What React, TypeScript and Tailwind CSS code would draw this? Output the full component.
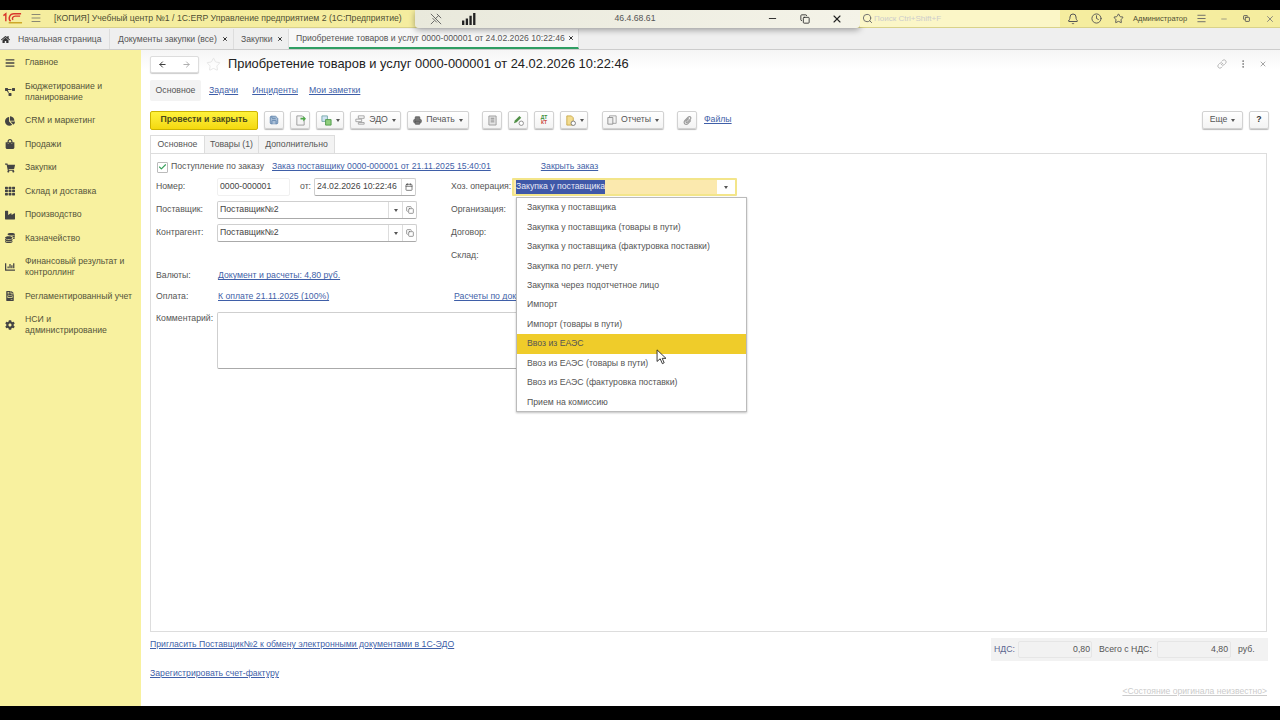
import {
  ArrowLeft,
  ArrowRight,
  Bell,
  Calendar,
  Check,
  Clock,
  Copy,
  EllipsisVertical,
  Link as LinkIcon,
  Menu,
  Minus,
  Printer,
  Save,
  Search,
  Star,
  X,
} from "lucide-react";
import {
  FaBars,
  FaChartBar,
  FaChartPie,
  FaCoins,
  FaCog,
  FaFileInvoice,
  FaHome,
  FaIndustry,
  FaPaperclip,
  FaProjectDiagram,
  FaShoppingBag,
  FaShoppingCart,
  FaTh,
} from "react-icons/fa";

const menu = [
  { icon: FaBars, label: "Главное", h: "h-[23px]" },
  { icon: FaProjectDiagram, label: "Бюджетирование и\nпланирование", h: "h-[35px]" },
  { icon: FaChartPie, label: "CRM и маркетинг", h: "h-[23px]" },
  { icon: FaShoppingBag, label: "Продажи", h: "h-[24px]" },
  { icon: FaShoppingCart, label: "Закупки", h: "h-[23px]" },
  { icon: FaTh, label: "Склад и доставка", h: "h-[24px]" },
  { icon: FaIndustry, label: "Производство", h: "h-[23px]" },
  { icon: FaCoins, label: "Казначейство", h: "h-[24px]" },
  { icon: FaChartBar, label: "Финансовый результат и\nконтроллинг", h: "h-[34px]" },
  { icon: FaFileInvoice, label: "Регламентированный учет", h: "h-[24px]" },
  { icon: FaCog, label: "НСИ и\nадминистрирование", h: "h-[34px]" },
];

const options = [
  "Закупка у поставщика",
  "Закупка у поставщика (товары в пути)",
  "Закупка у поставщика (фактуровка поставки)",
  "Закупка по регл. учету",
  "Закупка через подотчетное лицо",
  "Импорт",
  "Импорт (товары в пути)",
  "Ввоз из ЕАЭС",
  "Ввоз из ЕАЭС (товары в пути)",
  "Ввоз из ЕАЭС (фактуровка поставки)",
  "Прием на комиссию",
];

function Caret() {
  return <span className="ml-[4px] h-0 w-0 border-x-[2.5px] border-t-[3px] border-x-transparent border-t-[#555]" />;
}

function Btn({ children, w }: { children: React.ReactNode; w: string }) {
  return (
    <div className={`flex h-[18px] ${w} shrink-0 items-center justify-center rounded-[2px] border border-[#d2d2d2] bg-gradient-to-b from-white to-[#f3f3f3] text-[8.7px] text-[#555] shadow-[0_1px_1px_#bbb]`}>
      {children}
    </div>
  );
}

function Combo({ value }: { value: string }) {
  return (
    <div className="flex h-[18px] w-[200px] items-center rounded-[2px] border border-[#cfcfcf] border-b-[#aaa] bg-white text-[#444]">
      <span className="flex-1 pl-[2px]">{value}</span>
      <span className="flex h-full w-[14px] items-center justify-center border-l border-[#ddd]">
        <span className="h-0 w-0 border-x-[2.5px] border-t-[3px] border-x-transparent border-t-[#555]" />
      </span>
      <span className="flex h-full w-[14px] items-center justify-center border-l border-[#ddd]">
        <Copy className="h-[8px] w-[8px] text-[#666]" />
      </span>
    </div>
  );
}

function Lnk({ children, className = "" }: { children: React.ReactNode; className?: string }) {
  return <span className={`whitespace-nowrap text-[#3f5fa8] underline ${className}`}>{children}</span>;
}

export default function App() {
  return (
    <div className="relative flex h-screen w-[1280px] flex-col overflow-hidden bg-black font-['Liberation_Sans',Arial,sans-serif] text-[8.7px] text-[#555]">
      <div className="h-[10px] shrink-0 bg-black" />

      {/* заголовок окна */}
      <div className="relative z-10 flex h-[18px] shrink-0 items-center border-b border-[#d9d28a] bg-[#f5ed9f]">
        <div className="flex w-[415px] shrink-0 items-center">
          <svg viewBox="0 0 22 12" className="ml-[2px] h-[12px] w-[21px]">
            <path d="M1.5 3.5 L4 1.5 V9.5 M9 9.5 C6 6.5 8 1.5 12.5 1.5 H20 M11.5 8 C10 6 11.5 4 14 4 H19" fill="none" stroke="#d9372c" strokeWidth="1.5" />
            <path d="M7 11 H21" stroke="#c9a01c" strokeWidth="1.4" />
          </svg>
          <Menu className="ml-[7px] h-[12px] w-[12px] text-[#666]" strokeWidth={1.5} />
          <span className="ml-[12px] whitespace-nowrap text-[#4f4f33]">[КОПИЯ] Учебный центр №1 / 1С:ERP Управление предприятием 2 (1С:Предприятие)</span>
        </div>
        <div className="flex h-[18px] w-[445px] shrink-0 items-center rounded-b-[4px] bg-gradient-to-r from-[#e9e9dc] to-[#f4f3e8] text-[#444] shadow-[0_2px_6px_rgba(0,0,0,0.35)]">
          <svg viewBox="0 0 14 14" className="ml-[15px] h-[12px] w-[12px]">
            <path d="M1 1 L13 13 M8 1 L13 6 M10 3 L6 7 M3 6 L8 11 M5 9 L1 13" fill="none" stroke="#555" strokeWidth="1" />
          </svg>
          <svg viewBox="0 0 16 13" className="ml-[19px] h-[12px] w-[15px]">
            <path d="M1 8h2.5v5H1zM5 6h2.5v7H5zM9 3h2.5v10H9zM13 0h2.5v13H13z" fill="#222" />
          </svg>
          <span className="ml-[136px] w-[46px] whitespace-nowrap text-center text-[#555]">46.4.68.61</span>
          <Minus className="ml-[109px] h-[11px] w-[11px] text-[#222]" strokeWidth={2} />
          <Copy className="ml-[22px] h-[10px] w-[10px] text-[#222]" strokeWidth={2} />
          <X className="ml-[21px] h-[12px] w-[12px] text-[#222]" strokeWidth={2.2} />
        </div>
        <div className="flex h-full flex-1 items-center">
          <div className="flex h-full w-[200px] items-center bg-[#fbf6c7] pl-[2px]">
            <Search className="h-[11px] w-[11px] text-[#666]" />
            <span className="ml-[1px] text-[8px] text-[#ccc]">Поиск Ctrl+Shift+F</span>
          </div>
          <Bell className="ml-[7px] h-[12px] w-[12px] text-[#555]" />
          <Clock className="ml-[12px] h-[11px] w-[11px] text-[#555]" />
          <Star className="ml-[11px] h-[11px] w-[11px] text-[#555]" />
          <span className="ml-[9px] whitespace-nowrap text-[7.5px] text-[#4f4f33]">Администратор</span>
          <Menu className="ml-[9px] h-[11px] w-[11px] text-[#666]" />
          <Minus className="ml-[13px] h-[8px] w-[8px] text-[#777]" />
          <Copy className="ml-[15px] h-[7px] w-[7px] text-[#555]" strokeWidth={3} />
          <X className="ml-[15px] h-[10px] w-[10px] text-[#777]" />
        </div>
      </div>

      {/* вкладки */}
      <div className="flex h-[22px] shrink-0 border-b border-[#ccc] bg-[#efefef] pt-[1px] text-[8.65px] text-[#555]">
        <div className="flex w-[110px] items-center border-r border-[#ddd] pl-[1px]">
          <FaHome className="h-[9px] w-[9px] text-[#333]" />
          <span className="ml-[8px] whitespace-nowrap">Начальная страница</span>
        </div>
        <div className="flex w-[124px] items-center border-r border-[#ddd] pl-[8px]">
          <span className="whitespace-nowrap">Документы закупки (все)</span>
          <X className="ml-[5px] h-[6px] w-[6px] text-[#333]" strokeWidth={4} />
        </div>
        <div className="flex w-[55px] items-center border-r border-[#ddd] pl-[7px]">
          <span>Закупки</span>
          <X className="ml-[5px] h-[6px] w-[6px] text-[#333]" strokeWidth={4} />
        </div>
        <div className="flex w-[290px] items-center border-b-2 border-r border-b-[#2f9e63] border-r-[#ddd] bg-[#f7f7f7] pl-[7px]">
          <span className="whitespace-nowrap">Приобретение товаров и услуг 0000-000001 от 24.02.2026 10:22:46</span>
          <X className="ml-[3px] h-[6px] w-[6px] text-[#333]" strokeWidth={4} />
        </div>
      </div>

      <div className="flex min-h-0 flex-1">
        {/* левое меню */}
        <div className="w-[141px] shrink-0 bg-[#f8f19f] pt-[1px] text-[#54543a]">
          {menu.map((m) => (
            <div key={m.label} className={`flex ${m.h} items-center pl-[5px]`}>
              <m.icon className="h-[10px] w-[10px] shrink-0 text-[#444]" />
              <span className="ml-[10px] whitespace-pre-line leading-[11px]">{m.label}</span>
            </div>
          ))}
        </div>

        {/* форма */}
        <div className="flex min-w-0 flex-1 flex-col bg-gradient-to-b from-[#f5f5f5] to-white to-[3%] pl-[9px] pr-[13px]">
          <div className="flex h-[26px] items-center pt-[2px]">
            <div className="flex h-[17px] w-[49px] items-center justify-around rounded-[2px] border border-[#ddd] bg-white shadow-[0_1px_1px_#ccc]">
              <ArrowLeft className="h-[9px] w-[9px] text-[#333]" strokeWidth={2.5} />
              <ArrowRight className="h-[9px] w-[9px] text-[#aaa]" strokeWidth={2.5} />
            </div>
            <Star className="ml-[7px] h-[15px] w-[15px] text-[#ddd]" strokeWidth={1.2} />
            <span className="ml-[7px] whitespace-nowrap text-[12.87px] text-[#222]">Приобретение товаров и услуг 0000-000001 от 24.02.2026 10:22:46</span>
            <div className="ml-auto flex items-center text-[#aaa]">
              <LinkIcon className="h-[10px] w-[10px]" />
              <EllipsisVertical className="ml-[11px] h-[10px] w-[10px] text-[#777]" />
              <X className="ml-[11px] h-[8px] w-[8px] text-[#777]" />
            </div>
          </div>

          <div className="mt-[3px] flex h-[22px] items-center pt-[1px]">
            <span className="flex h-full w-[51px] items-center justify-center rounded-[2px] bg-[#f3f3f3] text-[#555]">Основное</span>
            <Lnk className="ml-[8px]">Задачи</Lnk>
            <Lnk className="ml-[14px]">Инциденты</Lnk>
            <Lnk className="ml-[11px]">Мои заметки</Lnk>
          </div>

          {/* командная панель */}
          <div className="mt-[9px] flex h-[20px] items-center">
            <div className="flex h-[19px] w-[108px] items-center justify-center rounded-[2px] border border-[#cdb400] bg-gradient-to-b from-[#fff23a] to-[#f4d90c] font-bold text-[#4a4a1a]">Провести и закрыть</div>
            <div className="ml-[6px]"><Btn w="w-[20px]"><Save className="h-[10px] w-[10px] fill-[#a9bfd8] text-[#5a7fa8]" /></Btn></div>
            <div className="ml-[6px]">
              <Btn w="w-[20px]">
                <svg viewBox="0 0 12 12" className="h-[11px] w-[11px]">
                  <path d="M2 1h6l2 2v8H2z" fill="#f4f4f4" stroke="#999" />
                  <path d="M6 3h3V1l3 3-3 3V5H6z" fill="#4fa84a" />
                </svg>
              </Btn>
            </div>
            <div className="ml-[6px]">
              <Btn w="w-[28px]">
                <svg viewBox="0 0 12 12" className="h-[11px] w-[11px]">
                  <path d="M1 1h6v6H1z" fill="#cfe3f2" stroke="#7aa" />
                  <path d="M5 5h6v6H5z" fill="#8fce7d" stroke="#4f9a4a" />
                </svg>
                <Caret />
              </Btn>
            </div>
            <div className="ml-[6px]">
              <Btn w="w-[51px]">
                <svg viewBox="0 0 12 12" className="mr-[4px] h-[10px] w-[10px]">
                  <path d="M4 1h7v3H4zM1 5h7v3H1zM4 9h7v2H4z" fill="none" stroke="#999" />
                </svg>
                ЭДО<Caret />
              </Btn>
            </div>
            <div className="ml-[6px]"><Btn w="w-[62px]"><Printer className="mr-[4px] h-[9px] w-[9px] fill-[#777] text-[#555]" />Печать<Caret /></Btn></div>
            <div className="ml-[13px]">
              <Btn w="w-[20px]">
                <svg viewBox="0 0 10 12" className="h-[11px] w-[9px]">
                  <path d="M1 1h8v10H1z" fill="#e4e4e4" stroke="#999" />
                  <path d="M3 3.5h4M3 5.5h4M3 7.5h4" stroke="#888" />
                </svg>
              </Btn>
            </div>
            <div className="ml-[6px]">
              <Btn w="w-[20px]">
                <svg viewBox="0 0 12 12" className="h-[11px] w-[11px]">
                  <path d="M7 1l2 2-5 5-3 1 1-3z" fill="#4f8f45" />
                  <circle cx="9" cy="9" r="2.4" fill="#fff" stroke="#888" />
                </svg>
              </Btn>
            </div>
            <div className="ml-[6px]"><Btn w="w-[20px]"><span className="flex flex-col text-center text-[5px] font-bold leading-[5px]"><span className="text-[#3d8f3d]">ДТ</span><span className="text-[#c9483c]">КТ</span></span></Btn></div>
            <div className="ml-[6px]">
              <Btn w="w-[28px]">
                <svg viewBox="0 0 12 12" className="h-[11px] w-[11px]">
                  <path d="M2 1h5l2 2v8H2z" fill="#f3dc8f" stroke="#c9a94a" />
                  <circle cx="9" cy="9" r="2.4" fill="#fff" stroke="#777" />
                </svg>
                <Caret />
              </Btn>
            </div>
            <div className="ml-[14px]">
              <Btn w="w-[62px]">
                <svg viewBox="0 0 12 12" className="mr-[4px] h-[10px] w-[10px]">
                  <path d="M3 1h8v9H3z" fill="#f4f4f4" stroke="#999" />
                  <path d="M1 3h6v8H1z" fill="#eee" stroke="#888" />
                </svg>
                Отчеты<Caret />
              </Btn>
            </div>
            <div className="ml-[13px]"><Btn w="w-[20px]"><FaPaperclip className="h-[9px] w-[9px] text-[#999]" /></Btn></div>
            <Lnk className="ml-[7px]">Файлы</Lnk>
            <div className="ml-auto"><Btn w="w-[41px]">Еще<Caret /></Btn></div>
            <div className="ml-[6px] mr-[-2px]"><Btn w="w-[20px]"><span className="font-bold text-[#333]">?</span></Btn></div>
          </div>

          {/* закладки */}
          <div className="mt-[5px] flex h-[18px] items-end">
            <span className="flex h-[18px] w-[55px] items-center justify-center border border-b-0 border-[#ddd] bg-white">Основное</span>
            <span className="flex h-[18px] w-[54px] items-center justify-center border-r border-t border-[#ddd] bg-[#f3f3f3]">Товары (1)</span>
            <span className="flex h-[18px] w-[76px] items-center justify-center border-r border-t border-[#ddd] bg-[#f3f3f3]">Дополнительно</span>
          </div>

          {/* панель формы */}
          <div className="h-[479px] border border-[#ddd] pl-[5px] pt-[6px]">
            <div className="flex h-[14px] items-center">
              <span className="ml-[1px] flex h-[11px] w-[11px] items-center justify-center rounded-[1px] border border-[#bbb]">
                <Check className="h-[10px] w-[10px] text-[#36a05a]" strokeWidth={3} />
              </span>
              <span className="ml-[3px] w-[101px] whitespace-nowrap">Поступление по заказу</span>
              <Lnk>Заказ поставщику 0000-000001 от 21.11.2025 15:40:01</Lnk>
              <Lnk className="ml-[50px]">Закрыть заказ</Lnk>
            </div>

            <div className="mt-[4px] flex h-[18px] items-center">
              <span className="w-[61px]">Номер:</span>
              <span className="flex h-[18px] w-[73px] items-center rounded-[2px] border border-[#f0f0f0] pl-[2px] text-[#444]">0000-000001</span>
              <span className="ml-[10px] w-[14px]">от:</span>
              <span className="flex h-[18px] w-[102px] items-center rounded-[2px] border border-[#cfcfcf] border-b-[#aaa] pl-[2px] text-[#444]">
                <span className="flex-1 whitespace-nowrap">24.02.2026 10:22:46</span>
                <span className="flex h-full w-[14px] items-center justify-center border-l border-[#ddd]"><Calendar className="h-[8px] w-[8px] text-[#444]" /></span>
              </span>
              <span className="ml-[35px] w-[61px] whitespace-nowrap">Хоз. операция:</span>
              <span className="flex h-[18px] w-[225px] items-center rounded-[1px] border-2 border-[#f3e58a] bg-[#fbe9ae] pl-[2px]">
                <span className="bg-[#3f58a8] text-[#e8e8f4]">Закупка у поставщика</span>
                <span className="ml-auto flex h-full w-[18px] items-center justify-center bg-white">
                  <span className="h-0 w-0 border-x-[2.5px] border-t-[3px] border-x-transparent border-t-[#555]" />
                </span>
              </span>
            </div>

            <div className="mt-[5px] flex h-[18px] items-center">
              <span className="w-[61px]">Поставщик:</span>
              <Combo value="Поставщик№2" />
              <span className="ml-[34px]">Организация:</span>
            </div>

            <div className="mt-[5px] flex h-[18px] items-center">
              <span className="w-[61px]">Контрагент:</span>
              <Combo value="Поставщик№2" />
              <span className="ml-[34px]">Договор:</span>
            </div>

            <div className="mt-[8px] flex h-[12px] items-center pl-[295px]">Склад:</div>

            <div className="mt-[8px] flex h-[12px] items-center">
              <span className="w-[62px]">Валюты:</span>
              <Lnk>Документ и расчеты: 4,80 руб.</Lnk>
            </div>

            <div className="mt-[9px] flex h-[12px] items-center">
              <span className="w-[62px]">Оплата:</span>
              <Lnk>К оплате 21.11.2025 (100%)</Lnk>
              <Lnk className="ml-[125px]">Расчеты по документу</Lnk>
            </div>

            <div className="mt-[9px] flex">
              <span className="w-[61px]">Комментарий:</span>
              <div className="h-[57px] w-[500px] rounded-[2px] border border-[#cfcfcf] border-b-[#aaa] bg-white" />
            </div>
          </div>

          {/* подвал */}
          <div className="flex items-start justify-between">
            <div className="flex flex-col pt-[6px]">
              <Lnk className="leading-[12px]">Пригласить Поставщик№2 к обмену электронными документами в 1С-ЭДО</Lnk>
              <Lnk className="mt-[17px] leading-[12px]">Зарегистрировать счет-фактуру</Lnk>
            </div>
            <div className="flex flex-col items-end">
              <div className="mr-[-1px] mt-[6px] flex h-[23px] w-[277px] items-center bg-[#f2f2f2] pl-[3px]">
                <span className="w-[24px] text-[#5a6690]">НДС:</span>
                <span className="flex h-[17px] w-[74px] items-center justify-end rounded-[2px] border border-[#e6e6e6] pr-[1px]">0,80</span>
                <span className="ml-[7px] w-[58px] whitespace-nowrap">Всего с НДС:</span>
                <span className="flex h-[17px] w-[74px] items-center justify-end rounded-[2px] border border-[#e6e6e6] pr-[2px]">4,80</span>
                <span className="ml-[7px]">руб.</span>
              </div>
              <span className="mt-[24px] whitespace-nowrap text-[8.6px] text-[#ccc] underline">&lt;Состояние оригинала неизвестно&gt;</span>
            </div>
          </div>
        </div>
      </div>

      <div className="h-[14px] shrink-0 bg-black" />

      {/* выпадающий список */}
      <div className="absolute left-[516px] top-[197px] z-20 h-[215px] w-[231px] border border-[#bbb] bg-white shadow-[0_1px_2px_rgba(0,0,0,0.25)]">
        {options.map((o) => (
          <div key={o} className={`flex h-[19.45px] items-center pl-[10px] text-[#555] ${o === "Ввоз из ЕАЭС" ? "bg-[#efcc2a]" : ""}`}>
            {o}
          </div>
        ))}
      </div>

      {/* курсор */}
      <svg viewBox="0 0 12 18" className="absolute left-[656px] top-[349px] z-30 h-[16px] w-[11px]">
        <path d="M1 1 V14 L4.5 11 L7 16.5 L9 15.5 L6.8 10.5 H11 Z" fill="#fff" stroke="#222" strokeWidth="1" />
      </svg>
    </div>
  );
}
